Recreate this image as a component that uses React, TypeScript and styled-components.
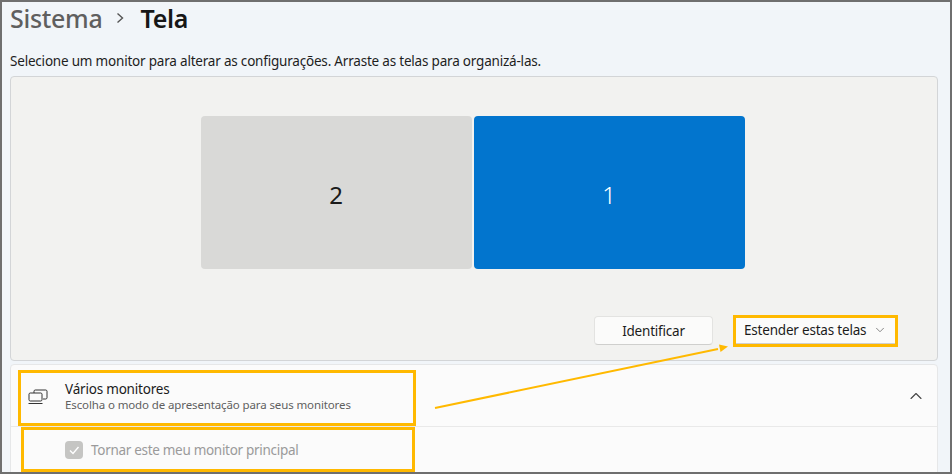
import styled, { createGlobalStyle } from 'styled-components'
import { ChevronDown, ChevronUp } from 'lucide-react'

const GlobalStyle = createGlobalStyle`
    html, body {
        margin: 0;
        padding: 0;
        background: #fff;
    }
    * {
        box-sizing: border-box;
    }
`

const Frame = styled.div`
    position: relative;
    width: 952px;
    height: 474px;
    overflow: hidden;
    border: 2px solid #6f6f6f;
    background: #f1f5f9;
    padding: 0 12px 0 8px;
    font-family: 'Noto Sans', 'Open Sans', sans-serif;
    color: #1b1b1b;
`

const Breadcrumb = styled.div`
    display: flex;
    align-items: center;
    height: 34px;
    padding-bottom: 2px;
    font-size: 25px;
    font-weight: 500;
    line-height: 32px;
    letter-spacing: -0.3px;
`

const ParentCrumb = styled.span`
    color: #5f5f5f;
`

const Current = styled.span`
    color: #171717;
    font-weight: 600;
`

const CrumbArrow = styled.svg`
    width: 10px;
    height: 12px;
    margin: 0 15px 0 13px;
`

const Intro = styled.p`
    margin: 16px 0 5px;
    font-size: 13.5px;
    line-height: 19px;
    letter-spacing: -0.2px;
    color: #1e1e1e;
`

const DisplayPanel = styled.section`
    height: 285px;
    border: 1px solid #d3d5d7;
    border-radius: 4px;
    background: #f2f2f0;
    padding: 39px 0 0;
`

const MonitorRow = styled.div`
    display: flex;
    justify-content: center;
    gap: 2px;
    padding-right: 3px;
`

const Monitor = styled.div<{ $active?: boolean }>`
    display: flex;
    align-items: center;
    justify-content: center;
    width: 271px;
    height: 153px;
    padding-top: 4px;
    border-radius: 4px;
    background: ${(props) => (props.$active ? '#0275ce' : '#d9d9d7')};
    color: ${(props) => (props.$active ? '#ffffff' : '#1a1a1a')};
    font-size: 24px;
    font-weight: ${(props) => (props.$active ? 300 : 400)};
`

const ActionRow = styled.div`
    display: flex;
    justify-content: flex-end;
    align-items: center;
    gap: 23px;
    margin-top: 47px;
    padding-right: 42px;
`

const IdentifyButton = styled.button`
    width: 119px;
    height: 29px;
    padding: 0;
    border: 1px solid #e3e3e1;
    border-bottom-color: #cfcfcd;
    border-radius: 4px;
    background: #fbfbfa;
    color: #1b1b1b;
    font: inherit;
    font-size: 13.5px;
    letter-spacing: -0.2px;
`

const Dropdown = styled.div`
    display: flex;
    align-items: center;
    justify-content: space-between;
    width: 159px;
    height: 26px;
    padding: 0 8px 0 8px;
    outline: 3px solid #ffb900;
    background: #fbfbfa;
    border-bottom: 1px solid #d0d0ce;
    font-size: 13.5px;
    letter-spacing: -0.2px;
    color: #1b1b1b;
    svg {
        color: #777;
    }
`

const SettingsCard = styled.section`
    height: 120px;
    margin-top: 3px;
    border: 1px solid #e6e7e8;
    border-radius: 4px;
    background: #fbfbfb;
`

const CardHeader = styled.div`
    display: flex;
    align-items: flex-start;
    justify-content: space-between;
    height: 62px;
    padding: 5px 11px 0 7px;
    border-bottom: 1px solid #e9e9e9;
`

const HeaderHighlight = styled.div`
    display: flex;
    align-items: center;
    width: 398px;
    height: 56px;
    border: 3px solid #ffb900;
    padding: 0 0 3px 7px;
`

const MonitorsIcon = styled.svg`
    width: 20px;
    height: 18px;
    margin-right: 17px;
    flex: none;
`

const HeaderTitle = styled.div`
    font-size: 13.5px;
    line-height: 17px;
    letter-spacing: -0.2px;
    color: #1b1b1b;
`

const HeaderSub = styled.div`
    font-size: 11.5px;
    line-height: 14px;
    letter-spacing: -0.12px;
    color: #5f5f5f;
`

const CollapseIcon = styled(ChevronUp)`
    margin-top: 16px;
    color: #444;
`

const OptionRow = styled.div`
    padding-left: 10px;
`

const OptionHighlight = styled.div`
    display: flex;
    align-items: center;
    gap: 8px;
    width: 394px;
    height: 45px;
    border: 3px solid #ffb900;
    padding: 1px 0 0 41px;
    font-size: 13.5px;
    letter-spacing: -0.3px;
    color: #9a9a9a;
`

const DisabledCheck = styled.span`
    display: flex;
    align-items: center;
    justify-content: center;
    width: 18px;
    height: 18px;
    border-radius: 4px;
    background: #c5c5c3;
`

const CalloutArrow = styled.svg`
    position: absolute;
    left: 0;
    top: 0;
    width: 948px;
    height: 470px;
    pointer-events: none;
`

export default function App() {
    return (
        <Frame>
            <GlobalStyle />
            <Breadcrumb>
                <ParentCrumb>Sistema</ParentCrumb>
                <CrumbArrow viewBox="0 0 10 12">
                    <path d="M2.5 1.5 7.5 6l-5 4.5" fill="none" stroke="#555" strokeWidth="1.4" />
                </CrumbArrow>
                <Current>Tela</Current>
            </Breadcrumb>
            <Intro>Selecione um monitor para alterar as configurações. Arraste as telas para organizá-las.</Intro>
            <DisplayPanel>
                <MonitorRow>
                    <Monitor>2</Monitor>
                    <Monitor $active>1</Monitor>
                </MonitorRow>
                <ActionRow>
                    <IdentifyButton type="button">Identificar</IdentifyButton>
                    <Dropdown>
                        Estender estas telas
                        <ChevronDown size={14} strokeWidth={1.5} />
                    </Dropdown>
                </ActionRow>
            </DisplayPanel>
            <SettingsCard>
                <CardHeader>
                    <HeaderHighlight>
                        <MonitorsIcon viewBox="0 0 20 18">
                            <path
                                d="M6 5V3.2C6 2.5 6.5 2 7.2 2h10.6c.7 0 1.2.5 1.2 1.2v6.6c0 .7-.5 1.2-1.2 1.2H15M2.2 5h10.6c.7 0 1.2.5 1.2 1.2v5.6c0 .7-.5 1.2-1.2 1.2H2.2C1.5 13 1 12.500 1 11.800V6.200C1 5.500 1.500 5 2.200 5ZM0.500 15.500h14"
                                fill="none"
                                stroke="#333"
                                strokeWidth="1"
                            />
                        </MonitorsIcon>
                        <div>
                            <HeaderTitle>Vários monitores</HeaderTitle>
                            <HeaderSub>Escolha o modo de apresentação para seus monitores</HeaderSub>
                        </div>
                    </HeaderHighlight>
                    <CollapseIcon size={20} strokeWidth={1.3} />
                </CardHeader>
                <OptionRow>
                    <OptionHighlight>
                        <DisabledCheck>
                            <svg width="12" height="12" viewBox="0 0 12 12">
                                <path d="M2 6.500 5 9.500 10.500 3" fill="none" stroke="#fff" strokeWidth="1.4" />
                            </svg>
                        </DisabledCheck>
                        Tornar este meu monitor principal
                    </OptionHighlight>
                </OptionRow>
            </SettingsCard>
            <CalloutArrow viewBox="0 0 948 470">
                <line x1="433" y1="406" x2="716" y2="347" stroke="#ffb900" strokeWidth="2" />
                <path d="M726 344.500 717 342.500 718.500 350Z" fill="#ffb900" />
            </CalloutArrow>
        </Frame>
    )
}
